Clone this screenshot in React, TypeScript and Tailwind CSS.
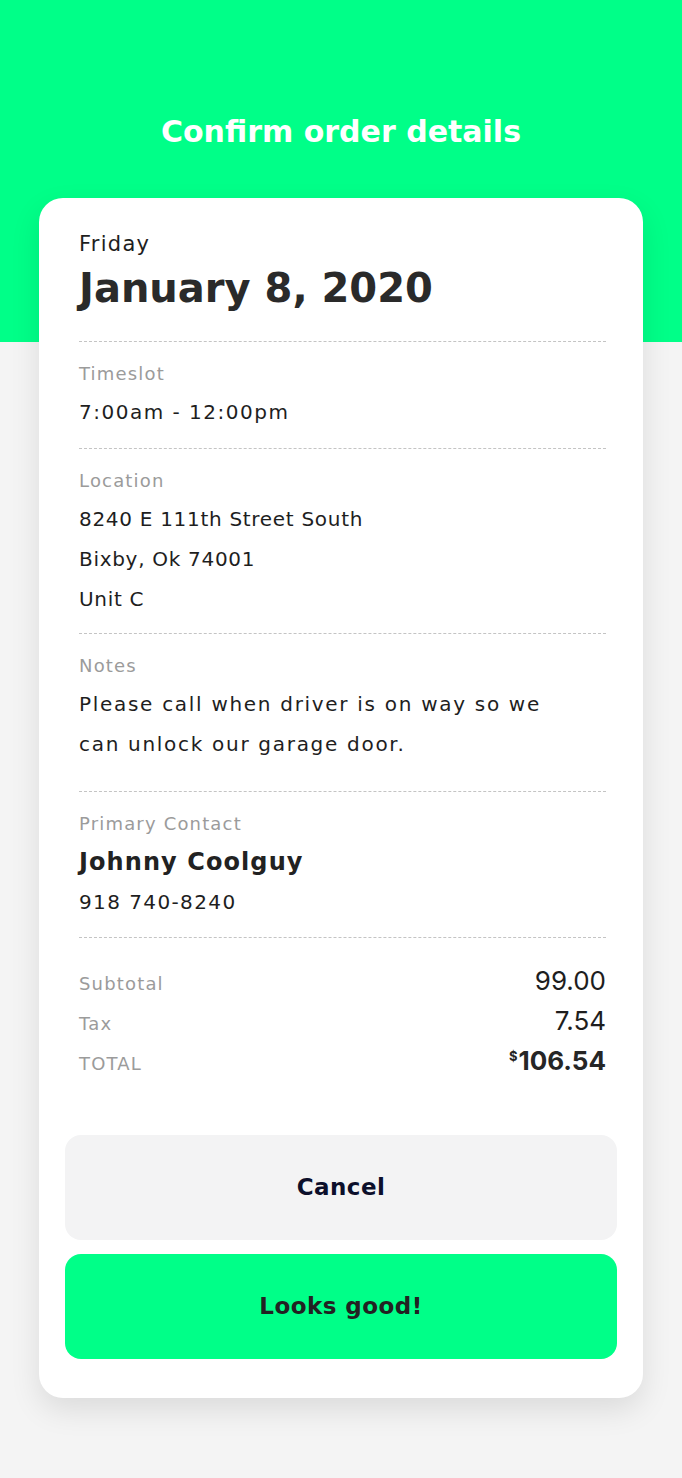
import React from "react";

const font = { fontFamily: '"DejaVu Sans", "Open Sans", sans-serif' };
const num = { fontFamily: 'Inter, Roboto, sans-serif' };

function Divider() {
  return <div className="border-t border-dashed border-[#c4c4c4]" />;
}

function Label({ children }: { children: React.ReactNode }) {
  return <div className="text-[18px] leading-[24px] tracking-[0.065em] text-[#9b9b9b] font-normal">{children}</div>;
}

export default function App() {
  return (
    <div className="min-h-[1478px] bg-[#f4f4f4]" style={font}>
      <div className="h-[342px] bg-[#00ff88] pt-[112px]">
        <h1 className="text-center text-[30px] leading-[40px] font-bold text-white">Confirm order details</h1>
      </div>
      <div className="mx-[39px] -mt-[144px] rounded-[24px] bg-white pb-[39px] shadow-[0_12px_30px_rgba(0,0,0,0.10)]">
        <div className="pl-[40px] pr-[37px] pt-[32px] text-[#1e1e1e]">
          <div className="text-[21px] leading-[28px] tracking-[0.06em]">Friday</div>
          <div className="mt-[6px] text-[40px] leading-[48px] font-bold text-[#2a2a2a]">January 8, 2020</div>
          <div className="h-[29px]" />
          <Divider />
          <div className="pt-[20px] pb-[16px]">
            <Label>Timeslot</Label>
            <div className="mt-[6px] text-[20px] leading-[40px] tracking-[0.075em]">7:00am - 12:00pm</div>
          </div>
          <Divider />
          <div className="pt-[20px] pb-[14px]">
            <Label>Location</Label>
            <div className="mt-[6px] text-[20px] leading-[40px] tracking-[0.035em]">
              <div>8240 E 111th Street South</div>
              <div>Bixby, Ok 74001</div>
              <div>Unit C</div>
            </div>
          </div>
          <Divider />
          <div className="pt-[20px] pb-[27px]">
            <Label>Notes</Label>
            <div className="mt-[6px] text-[20px] leading-[40px] tracking-[0.085em]">
              Please call when driver is on way so we
              <br />
              can unlock our garage door.
            </div>
          </div>
          <Divider />
          <div className="pt-[20px] pb-[15px]">
            <Label>Primary Contact</Label>
            <div className="mt-[6px] text-[24px] leading-[40px] tracking-[0.045em] font-bold text-[#222]">Johnny Coolguy</div>
            <div className="text-[20px] leading-[40px] tracking-[0.07em]">918 740-8240</div>
          </div>
          <Divider />
          <div className="pt-[23px]">
            <div className="flex items-baseline justify-between leading-[40px]">
              <Label>Subtotal</Label>
              <span className="text-[26px] text-[#1e1e1e]" style={num}>99.00</span>
            </div>
            <div className="flex items-baseline justify-between leading-[40px]">
              <Label>Tax</Label>
              <span className="text-[26px] text-[#1e1e1e]" style={num}>7.54</span>
            </div>
            <div className="flex items-baseline justify-between leading-[40px]">
              <Label>TOTAL</Label>
              <span className="text-[26px] font-bold text-[#262626]" style={num}>
                <span className="relative -top-[9px] mr-[1px] text-[13px] font-bold">$</span>106.54
              </span>
            </div>
          </div>
        </div>
        <div className="mt-[50px] flex flex-col gap-[14px] px-[26px]">
          <button className="h-[105px] w-full rounded-[16px] bg-[#f3f3f4] text-[23px] tracking-[0.02em] font-bold text-[#0c0f2b]">Cancel</button>
          <button className="h-[105px] w-full rounded-[16px] bg-[#00ff88] text-[23px] tracking-[0.02em] font-bold text-[#222]">Looks good!</button>
        </div>
      </div>
    </div>
  );
}
